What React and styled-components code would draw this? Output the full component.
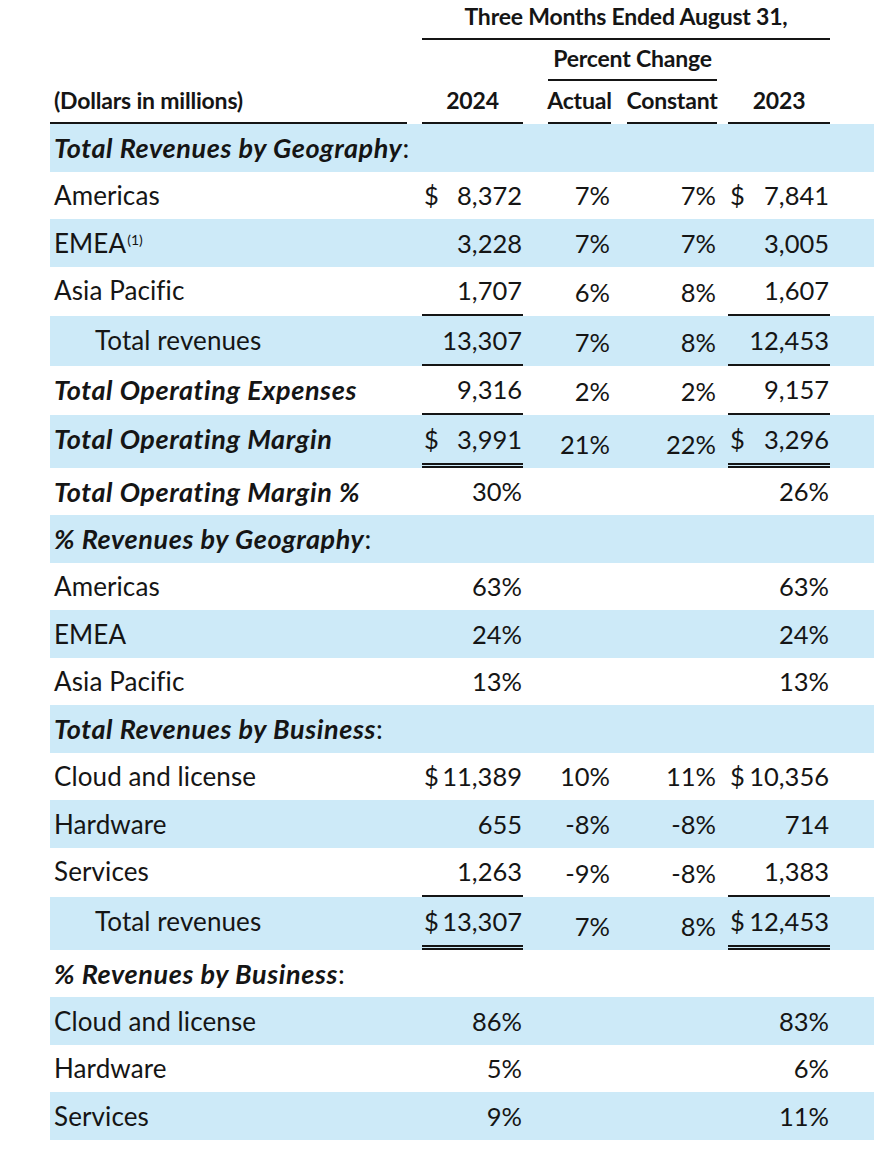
import React from 'react'
import styled, { createGlobalStyle } from 'styled-components'

const GlobalStyle = createGlobalStyle`
  html, body {
    margin: 0;
    padding: 0;
    background: #ffffff;
  }
  body {
    font-family: Lato, "Open Sans", "Liberation Sans", sans-serif;
    color: #151515;
  }
`

const COLS = '357px 15px 101px 25px 63px 16px 90px 11px 102px 13px'
const SHADE = '#cdeaf8'

const Page = styled.div`
  width: 874px;
  height: 1150px;
  padding-left: 50px;
  box-sizing: border-box;
  overflow: hidden;
`

const Grid = styled.div`
  display: grid;
  grid-template-columns: ${COLS};
  align-items: start;
  background: ${p => (p.$shade ? SHADE : 'transparent')};
`

const HeadCell = styled.div`
  grid-column: ${p => p.$col};
  height: ${p => p.$h}px;
  padding-bottom: ${p => p.$pb || 0}px;
  display: flex;
  align-items: center;
  justify-content: ${p => p.$align || 'center'};
  padding-left: ${p => p.$pl || 0}px;
  font-size: 23px;
  font-weight: 700;
  letter-spacing: -0.2px;
  white-space: nowrap;
  border-bottom: ${p => (p.$line ? '2px solid #151515' : 'none')};
`

const Label = styled.div`
  grid-column: 1;
  height: 47.5px;
  display: flex;
  align-items: center;
  padding-left: ${p => 4 + (p.$indent ? 41 : 0)}px;
  font-size: ${p => (p.$strong ? 27 : 26)}px;
  letter-spacing: ${p => (p.$strong ? 0.6 : 0.1)}px;
  font-weight: ${p => (p.$strong ? 700 : 400)};
  font-style: ${p => (p.$strong ? 'italic' : 'normal')};
  white-space: nowrap;
`

const Colon = styled.span`
  font-weight: 400;
  font-style: normal;
`

const Sup = styled.sup`
  font-size: 14px;
  position: relative;
  top: -3px;
  margin-left: 1px;
  letter-spacing: 0;
`

const Cell = styled.div`
  grid-column: ${p => p.$col};
  align-self: ${p => (p.$pct ? 'end' : 'start')};
  height: 47.5px;
  box-sizing: content-box;
  display: flex;
  align-items: center;
  justify-content: ${p => (p.$dollar ? 'space-between' : 'flex-end')};
  padding: 0 1px 0 2px;
  font-size: 25.5px;
  white-space: nowrap;
  border-bottom: ${p =>
    p.$line === 'double' ? '5px double #151515' : p.$line === 'single' ? '2px solid #151515' : 'none'};
`

const Dollar = styled.span`
  margin-right: 1px;
`

const rows = [
  { label: 'Total Revenues by Geography', section: true, shade: true },
  { label: 'Americas', v: ['$8,372', '7%', '7%', '$7,841'] },
  { label: 'EMEA', sup: '(1)', shade: true, v: ['3,228', '7%', '7%', '3,005'] },
  { label: 'Asia Pacific', v: ['1,707', '6%', '8%', '1,607'], line: 'single' },
  { label: 'Total revenues', indent: true, shade: true, v: ['13,307', '7%', '8%', '12,453'], line: 'single' },
  { label: 'Total Operating Expenses', strong: true, v: ['9,316', '2%', '2%', '9,157'], line: 'single' },
  { label: 'Total Operating Margin', strong: true, shade: true, v: ['$3,991', '21%', '22%', '$3,296'], line: 'double' },
  { label: 'Total Operating Margin %', strong: true, v: ['30%', '', '', '26%'] },
  { label: '% Revenues by Geography', section: true, shade: true },
  { label: 'Americas', v: ['63%', '', '', '63%'] },
  { label: 'EMEA', shade: true, v: ['24%', '', '', '24%'] },
  { label: 'Asia Pacific', v: ['13%', '', '', '13%'] },
  { label: 'Total Revenues by Business', section: true, shade: true },
  { label: 'Cloud and license', v: ['$11,389', '10%', '11%', '$10,356'] },
  { label: 'Hardware', shade: true, v: ['655', '-8%', '-8%', '714'] },
  { label: 'Services', v: ['1,263', '-9%', '-8%', '1,383'], line: 'single' },
  { label: 'Total revenues', indent: true, shade: true, v: ['$13,307', '7%', '8%', '$12,453'], line: 'double' },
  { label: '% Revenues by Business', section: true },
  { label: 'Cloud and license', shade: true, v: ['86%', '', '', '83%'] },
  { label: 'Hardware', v: ['5%', '', '', '6%'] },
  { label: 'Services', shade: true, v: ['9%', '', '', '11%'] },
]

const colOf = [3, 5, 7, 9]

function Amount({ value, col, line }) {
  const hasDollar = value.startsWith('$')
  const pct = col === 5 || col === 7
  return (
    <Cell $col={col} $pct={pct} $dollar={hasDollar} $line={pct ? null : line}>
      {hasDollar && <Dollar>$</Dollar>}
      <span>{hasDollar ? value.slice(1) : value}</span>
    </Cell>
  )
}

function App() {
  return (
    <>
      <GlobalStyle />
      <Page>
        <Grid>
          <HeadCell $col="3 / 10" $h={32} $pb={6} $line>Three Months Ended August 31,</HeadCell>
        </Grid>
        <Grid>
          <HeadCell $col="5 / 8" $h={36} $pb={3} $line>Percent Change</HeadCell>
        </Grid>
        <Grid>
          <HeadCell $col="1" $h={38} $pb={3} $line $align="flex-start" $pl={4}>(Dollars in millions)</HeadCell>
          <HeadCell $col="3" $h={38} $pb={3} $line>2024</HeadCell>
          <HeadCell $col="5" $h={38} $pb={3} $line>Actual</HeadCell>
          <HeadCell $col="7" $h={38} $pb={3} $line>Constant</HeadCell>
          <HeadCell $col="9" $h={38} $pb={3} $line>2023</HeadCell>
        </Grid>
        {rows.map((r, i) => (
          <Grid key={i} $shade={r.shade}>
            <Label $strong={r.section || r.strong} $indent={r.indent}>
              {r.label}
              {r.sup && <Sup>{r.sup}</Sup>}
              {r.section && <Colon>:</Colon>}
            </Label>
            {r.v &&
              r.v.map((val, j) =>
                val ? <Amount key={j} value={val} col={colOf[j]} line={r.line} /> : null
              )}
          </Grid>
        ))}
      </Page>
    </>
  )
}

export default App
